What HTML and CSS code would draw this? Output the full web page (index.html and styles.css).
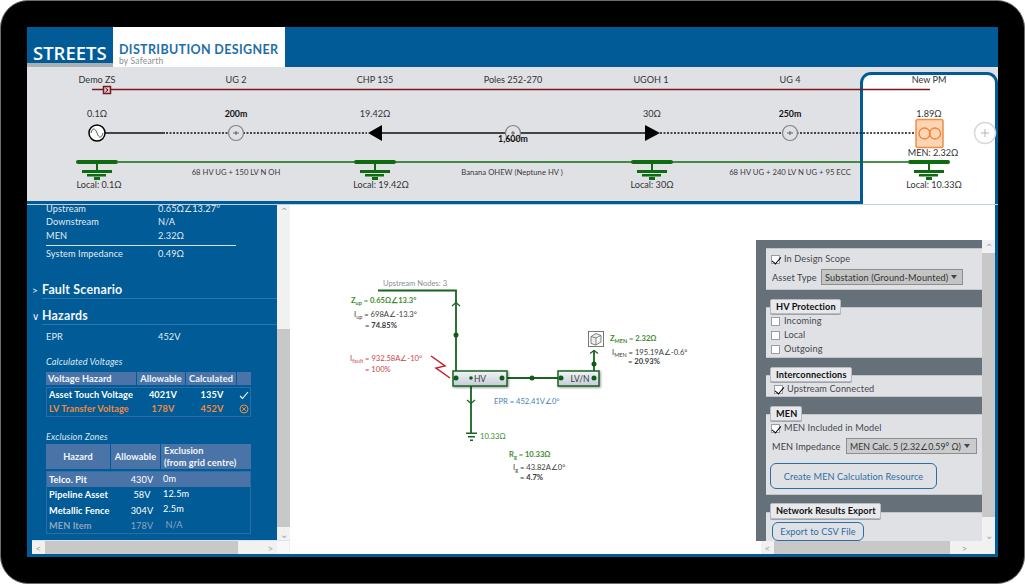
FILE: index.html
```html
<!DOCTYPE html>
<html lang="en">
<head>
<meta charset="utf-8">
<title>Streets Distribution Designer</title>
<link rel="stylesheet" href="styles.css">
</head>
<body>
<div class="device">
<div class="screen">
  <header class="header">
    <div class="brand">STREETS</div>
    <div class="logo">
      <div class="logo-title">DISTRIBUTION DESIGNER</div>
      <div class="logo-sub">by Safearth</div>
    </div>
  </header>

  <section class="strip">
    <div class="new-pm"></div>
    <svg class="strip-svg" viewBox="27 67 971 137" width="971" height="137">
      <g class="t c">
        <text x="97" y="83">Demo ZS</text><text x="236" y="83">UG 2</text><text x="375" y="83">CHP 135</text>
        <text x="513" y="83">Poles 252-270</text><text x="651" y="83">UGOH 1</text><text x="790" y="83">UG 4</text><text x="929" y="83">New PM</text>
        <text x="97" y="117">0.1Ω</text><text x="375" y="117">19.42Ω</text><text x="652" y="117">30Ω</text><text x="929" y="117">1.89Ω</text>
      </g>
      <path class="red-line" d="M92 89.5H930"/>
      <rect class="red-box" x="103.5" y="86.5" width="7" height="7"/>
      <path class="red-chev" d="M105.5 88l2.5 2-2.5 2"/>

      <path class="black-line" d="M105 133H165M382 133H645"/>
      <path class="black-dots" d="M166 133H367M660 133H915"/>
      <path class="tri" d="M368 133L382 125V141Z"/>
      <path class="tri" d="M660 133L645 125V141Z"/>
      <circle class="source" cx="97" cy="133" r="8"/>
      <path class="sine" d="M91 133c1.500-5.500 4-5.500 6 0s4.500 5.500 6 0"/>

      <g class="node"><circle cx="236" cy="133" r="7.500"/><path d="M233 133h6M236 131v4"/></g>
      <g class="node"><circle cx="513" cy="133" r="7.500"/><path d="M511 133h4M513 131v4"/></g>
      <g class="node"><circle cx="790" cy="133" r="7.500"/><path d="M787 133h6M790 131v4"/></g>
      <g class="tb c">
        <text x="236" y="117">200m</text><text x="513" y="142">1,600m</text><text x="790" y="117">250m</text>
      </g>

      <rect class="pm" x="916" y="119.500" width="27" height="28" rx="2"/>
      <circle class="pm-c" cx="924.500" cy="133.500" r="5.500"/><circle class="pm-c" cx="935" cy="133.500" r="5.500"/>
      <circle class="add" cx="985" cy="133" r="10.500"/>
      <path class="add-p" d="M981 133h8M985 129v8"/>

      <path class="green-line" d="M118 162H908"/>
      <g class="gnd"><rect x="76" y="160" width="42" height="4" rx="2"/><rect x="96" y="162" width="2" height="9"/><rect x="82" y="170" width="30" height="3"/><rect x="87" y="174" width="19" height="2.500"/><rect x="94" y="177" width="6" height="3"/></g>
      <g class="gnd"><rect x="354" y="160" width="42" height="4" rx="2"/><rect x="374" y="162" width="2" height="9"/><rect x="360" y="170" width="30" height="3"/><rect x="365" y="174" width="19" height="2.500"/><rect x="372" y="177" width="6" height="3"/></g>
      <g class="gnd"><rect x="631" y="160" width="42" height="4" rx="2"/><rect x="651" y="162" width="2" height="9"/><rect x="637" y="170" width="30" height="3"/><rect x="642" y="174" width="19" height="2.500"/><rect x="649" y="177" width="6" height="3"/></g>
      <g class="gnd"><rect x="908" y="160" width="42" height="4" rx="2"/><rect x="928" y="162" width="2" height="9"/><rect x="914" y="170" width="30" height="3"/><rect x="919" y="174" width="19" height="2.500"/><rect x="926" y="177" width="6" height="3"/></g>
      <g class="t c">
        <text x="933" y="156">MEN: 2.32Ω</text>
        <text x="99" y="188">Local: 0.1Ω</text><text x="381" y="188">Local: 19.42Ω</text><text x="652" y="188">Local: 30Ω</text><text x="934" y="188">Local: 10.33Ω</text>
      </g>
      <g class="ts c">
        <text x="236" y="175">68 HV UG + 150 LV N OH</text>
        <text x="512" y="175">Banana OHEW (Neptune HV )</text>
        <text x="790" y="175">68 HV UG + 240 LV N UG + 95 ECC</text>
      </g>
    </svg>
  </section>

  <main class="main">
    <aside class="left">
      <div class="left-scroll">
        <div class="left-body">
          <div class="kv kv-first"><span>Upstream</span><span>0.65Ω∠13.27°</span></div>
          <div class="kv"><span>Downstream</span><span>N/A</span></div>
          <div class="kv kv-rule"><span>MEN</span><span>2.32Ω</span></div>
          <div class="kv"><span>System Impedance</span><span>0.49Ω</span></div>
          <h2 class="section section-first"><span class="chev">&gt;</span>Fault Scenario</h2>
          <h2 class="section"><span class="chev">&#8744;</span>Hazards</h2>
          <div class="kv kv-epr"><span>EPR</span><span>452V</span></div>
          <div class="sub">Calculated Voltages</div>
          <div class="grid-head gh-a"><span>Voltage Hazard</span><span class="mid">Allowable</span><span class="mid">Calculated</span><span></span></div>
          <div class="grid-body">
            <div class="vrow"><b>Asset Touch Voltage</b><b class="mid">4021V</b><b class="mid">135V</b><svg class="ic" viewBox="0 0 10 10" width="10" height="10"><path class="ic-check" d="M1 6l2.500 2.500L9 2"/></svg></div>
            <div class="vrow vrow-bad"><b>LV Transfer Voltage</b><b class="mid">178V</b><b class="mid">452V</b><svg class="ic" viewBox="0 0 10 10" width="10" height="10"><circle class="ic-x" cx="5" cy="5" r="4"/><path class="ic-x" d="M3.200 3.200l3.600 3.600M6.800 3.200l-3.600 3.600"/></svg></div>
          </div>
          <div class="sub sub-ex">Exclusion Zones</div>
          <div class="grid-head gh-b"><span class="mid">Hazard</span><span class="mid">Allowable</span><span>Exclusion<br>(from grid centre)</span></div>
          <div class="grid-body gb-b">
            <div class="erow erow-on"><b>Telco. Pit</b><span class="mid">430V</span><span>0m</span></div>
            <div class="erow"><b>Pipeline Asset</b><span class="mid">58V</span><span>12.5m</span></div>
            <div class="erow"><b>Metallic Fence</b><span class="mid">304V</span><span>2.5m</span></div>
            <div class="erow erow-off"><b>MEN Item</b><span class="mid">178V</span><span>&nbsp;N/A</span></div>
          </div>
        </div>
        <div class="vbar vbar-left"><span class="sb-arrow">&#8963;</span><span class="vtrack"></span><span class="vthumb"></span><span class="sb-arrow sb-down">&#8964;</span></div>
      </div>
      <div class="hbar hbar-left"><span class="sb-arrow">&lt;</span><span class="hthumb"></span><span class="htrack"></span><span class="sb-arrow">&gt;</span><span class="hcorner"></span></div>
    </aside>

    <section class="canvas">
      <svg class="canvas-svg" viewBox="290 204 465 351" width="465" height="351">
        <defs>
          <linearGradient id="busfill" x1="0" y1="0" x2="0" y2="1">
            <stop offset="0" stop-color="#f2f4f7"/><stop offset="1" stop-color="#c3ccd6"/>
          </linearGradient>
        </defs>
        <path class="g-line" d="M378 290.500H456V378M506 378H559M594 378V350M471 378V433"/>
        <path class="g-chev" d="M452 306l4-3.500 4 3.500M590 353.500l4-3 4 3M467 400l4 3.500 4-3.500"/>
        <text class="d d-gray c" x="415" y="286">Upstream Nodes: 3</text>
        <rect class="bus" x="453" y="371" width="54" height="15"/>
        <rect class="bus" x="558" y="371" width="41" height="15"/>
        <text class="d d-dark d-bus c" x="480" y="381.500">HV</text>
        <text class="d d-dark d-bus c" x="580" y="381.500">LV/N</text>
        <g class="dots">
          <circle cx="456" cy="335" r="2.500"/><circle cx="456" cy="378" r="2.500"/><circle cx="471" cy="378" r="1.800"/><circle cx="502" cy="378" r="2.500"/>
          <circle cx="532" cy="378" r="2.500"/><circle cx="561" cy="378" r="2.500"/><circle cx="594" cy="378" r="2.500"/><circle cx="594" cy="364" r="2.500"/>
        </g>
        <path class="bolt" d="M431 356L445 366L436 368L450 378"/>
        <g class="d-g-bars"><rect x="466" y="432.500" width="11" height="1.500"/><rect x="468" y="436" width="7" height="1.500"/><rect x="470" y="439.500" width="3" height="1.500"/></g>

        <rect class="asset" x="588.500" y="331.500" width="15" height="15"/>
        <path class="asset-i" d="M591 336.500l5-3 5 2-5 2.500zM591 336.500v7l5 1.500v-7M601 335.500v6.500l-5 3"/>

        <text class="d d-green d-b" x="351" y="303">Z<tspan class="sb" dy="2">up</tspan><tspan dy="-2"> = 0.65Ω∠13.3°</tspan></text>
        <text class="d d-dark" x="354" y="317">I<tspan class="sb" dy="2">up</tspan><tspan dy="-2"> = 698A∠-13.3°</tspan></text>
        <text class="d d-dark d-b" x="365" y="328">= 74.85%</text>
        <text class="d d-red" x="350" y="361">I<tspan class="sb" dy="2">fault</tspan><tspan dy="-2"> = 932.58A∠-10°</tspan></text>
        <text class="d d-red" x="365" y="372">= 100%</text>
        <text class="d d-green d-b" x="610" y="341">Z<tspan class="sb" dy="2">MEN</tspan><tspan dy="-2"> = 2.32Ω</tspan></text>
        <text class="d d-dark" x="612" y="355">I<tspan class="sb" dy="2">MEN</tspan><tspan dy="-2"> = 195.19A∠-0.6°</tspan></text>
        <text class="d d-dark d-b" x="628" y="364">= 20.93%</text>
        <text class="d d-blue" x="494" y="404">EPR = 452.41V∠0°</text>
        <text class="d d-green" x="480" y="439">10.33Ω</text>
        <text class="d d-green d-b" x="509" y="457">R<tspan class="sb" dy="2">g</tspan><tspan dy="-2"> = 10.33Ω</tspan></text>
        <text class="d d-dark" x="513" y="470">I<tspan class="sb" dy="2">g</tspan><tspan dy="-2"> = 43.82A∠0°</tspan></text>
        <text class="d d-dark d-b" x="520" y="480">= 4.7%</text>
      </svg>
    </section>

    <aside class="right">
      <div class="right-row">
        <div class="props">
          <div class="card card-a">
            <label class="chk"><span class="box on"></span>In Design Scope</label>
            <div class="field"><span class="lbl-a">Asset Type</span><span class="select sel-a">Substation (Ground-Mounted)<i class="caret"></i></span></div>
          </div>
          <div class="card card-tab card-hv">
            <div class="tab">HV Protection</div>
            <label class="chk"><span class="box"></span>Incoming</label>
            <label class="chk"><span class="box"></span>Local</label>
            <label class="chk"><span class="box"></span>Outgoing</label>
          </div>
          <div class="card card-tab">
            <div class="tab">Interconnections</div>
            <label class="chk chk-in"><span class="box on"></span>Upstream Connected</label>
          </div>
          <div class="card card-tab card-men">
            <div class="tab">MEN</div>
            <label class="chk"><span class="box on"></span>MEN Included in Model</label>
            <div class="field"><span class="lbl-b">MEN Impedance</span><span class="select sel-b">MEN Calc. 5 (2.32∠0.59° Ω)<i class="caret"></i></span></div>
            <button class="btn btn-lg">Create MEN Calculation Resource</button>
          </div>
          <div class="card card-tab card-last">
            <div class="tab tab-last">Network Results Export</div>
            <button class="btn btn-sm">Export to CSV File</button>
          </div>
        </div>
        <div class="vbar vbar-right"><span class="sb-arrow">&#8963;</span><span class="vthumb"></span><span class="vtrack"></span><span class="sb-arrow sb-down">&#8964;</span></div>
      </div>
      <div class="hbar hbar-right"><span class="sb-arrow">&lt;</span><span class="hthumb"></span><span class="sb-arrow sb-end">&gt;</span></div>
    </aside>
  </main>
</div>
</div>
</body>
</html>
```

FILE: styles.css
```css
* { box-sizing: border-box; }
html, body { margin: 0; padding: 0; background: #fff; }
body { width: 1025px; height: 584px; overflow: hidden; font-family: Lato, "Open Sans", sans-serif; }

.device {
  width: 1025px; height: 584px; padding: 26px;
  background: #000; border: 1px solid #6d6d6d; border-radius: 28px;
}
.screen { width: 971px; height: 530px; background: #fff; display: flex; flex-direction: column; overflow: hidden; }

.header { height: 40px; flex: none; background: #005b96; display: flex; }
.brand {
  width: 86px; height: 40px; padding: 12px 0 0 6px; color: #fff; font-size: 18.500px; line-height: 27px; font-weight: 600;
  border-bottom: 4px solid #a9b0b6; font-family: "Open Sans", Lato, sans-serif; overflow: hidden;
}
.logo { width: 172px; height: 40px; background: #fff; padding: 16px 0 0 6px; }
.logo-title { color: #1f6ea8; font-size: 12.500px; line-height: 14px; font-weight: 700; letter-spacing: .35px; white-space: nowrap; }
.logo-sub { color: #8a8f94; font-size: 8.500px; line-height: 9px; letter-spacing: .2px; }

.strip { height: 137px; flex: none; position: relative; background: #e0e1e5; border-bottom: 3px solid #005b96; box-shadow: 0 1px 0 #bcd2e2; }
.new-pm {
  position: absolute; left: 833px; top: 5px; width: 138px; height: 132px;
  background: #fff; border: 3px solid #005b96; border-bottom: 0; border-radius: 11px 11px 0 0;
}
.strip-svg { position: absolute; left: 0; top: 0; display: block; }

.t text { font-size: 9.100px; fill: #333; font-family: Lato, sans-serif; }
.tb text { font-size: 8.800px; fill: #111; font-weight: 700; font-family: Lato, sans-serif; }
.ts text { font-size: 7.700px; fill: #3a3a3a; font-family: Lato, sans-serif; }
.c, .c text { text-anchor: middle; }
.red-line { stroke: #7a1a20; stroke-width: 1.400; fill: none; }
.red-box { fill: #e0c8c8; stroke: #7a1a20; stroke-width: 1.500; }
.red-chev { stroke: #222; stroke-width: 1; fill: none; }
.black-line { stroke: #111; stroke-width: 1.500; fill: none; }
.black-dots { stroke: #111; stroke-width: 1.500; stroke-dasharray: 2 1.500; fill: none; }
.tri { fill: #000; }
.source { fill: #fff; stroke: #000; stroke-width: 1.500; }
.sine { fill: none; stroke: #333; stroke-width: .8; }
.node circle { fill: #e0e1e5; stroke: #808285; stroke-width: 1.200; }
.node path { stroke: #444; stroke-width: .8; fill: none; }
.pm { fill: #fcd5b5; stroke: #f58b45; stroke-width: 1.500; }
.pm-c { fill: none; stroke: #f47f30; stroke-width: 1.300; }
.add { fill: #fff; stroke: #d9d9d9; stroke-width: 1.500; }
.add-p { stroke: #b5b5b5; stroke-width: 1; fill: none; }
.green-line { stroke: #0f6b0f; stroke-width: 1.300; fill: none; }
.gnd rect { fill: #0f6b0f; }

.main { flex: 1; min-height: 0; display: flex; }

.left { width: 263px; flex: none; background: #005b96; display: flex; flex-direction: column; border-bottom: 3px solid #005b96; }
.left-scroll { flex: 1; min-height: 0; display: flex; overflow: hidden; }
.left-body { width: 250px; flex: none; color: #e3ebf3; font-size: 9.200px; letter-spacing: .1px; }
.kv { display: grid; grid-template-columns: 112px auto; line-height: 14px; height: 14px; margin-left: 19px; width: 190px; }
.kv-first { height: 11px; line-height: 9px; }
.kv-rule { height: 17px; border-bottom: 1px solid #d6e3ee; margin-bottom: 1px; }
.kv-epr { margin-top: 5px; }
.section {
  margin: 0 0 0 15px; height: 26px; padding-top: 8px; font-size: 12.400px; line-height: 18px; font-weight: 700; color: #f2f6fa;
  border-bottom: 1px solid #2a78ac; position: relative; letter-spacing: .2px;
}
.section-first { margin-top: 12px; }
.chev { position: absolute; left: -10px; top: 8px; font-weight: 400; font-size: 10px; }
.sub { margin: 12px 0 0 19px; font-style: italic; line-height: 12px; color: #dbe6f0; height: 12px; }
.sub-ex { margin-top: 14px; }
.grid-head { margin: 4px 0 0 19px; width: 205px; display: grid; gap: 1px; color: #f2f6fa; font-weight: 700; white-space: nowrap; }
.grid-head > span { background: #4a74a8; padding: 0 2px; }
.gh-a { grid-template-columns: 90px 48px 50px 14px; line-height: 13px; }
.gh-b { grid-template-columns: 64px 49px 90px; line-height: 12px; margin-top: 1px; }
.gh-b > span { min-height: 24px; display: flex; align-items: center; justify-content: center; }
.gh-b > span:last-child { display: block; padding: 1px 3px 0; text-align: left; }
.mid { text-align: center; }
.grid-body { margin: 2px 0 0 19px; width: 205px; border: 1px solid #2a6ea6; white-space: nowrap; }
.vrow { display: grid; grid-template-columns: 92px 48px 50px 14px; height: 14px; line-height: 14px; color: #fff; align-items: center; }
.vrow b { padding-left: 2px; }
.vrow .mid { padding: 0; }
.vrow-bad { color: #f08a3c; }
.ic { display: block; margin-left: 2px; }
.ic-check { stroke: #fff; stroke-width: 1.100; fill: none; }
.ic-x { stroke: #f08a3c; stroke-width: 1; fill: none; }
.gb-b { height: 63px; }
.erow { display: grid; grid-template-columns: 78px 34px 90px; height: 15.300px; line-height: 15px; color: #fff; align-items: center; }
.erow b { padding-left: 2px; }
.erow span:last-child { padding-left: 4px; margin-top: -3px; }
.erow-on { background: #4a74a8; }
.erow-off { color: #8ea6bf; }

.vbar { width: 13px; flex: none; display: flex; flex-direction: column; background: #f1f1f1; }
.sb-arrow { height: 13px; flex: none; width: 13px; display: flex; align-items: center; justify-content: center; color: #a5a5a5; font-size: 10px; line-height: 1; background: #f1f1f1; }
.vtrack { flex: none; background: #f1f1f1; }
.vbar-left .vtrack { height: 112px; }
.vbar-left .vthumb { height: 198px; flex: none; background: #c8c8c8; }
.vbar-right .vthumb { height: 264px; flex: none; background: #c8c8c8; }
.vbar-right .vtrack { flex: 1; }
.sb-down { margin-top: auto; }

.hbar { height: 14px; flex: none; display: flex; background: #f1f1f1; }
.hbar-left { margin-left: 5px; border-top: 1px solid #d6e6f1; }
.hthumb { background: #c8c8c8; }
.hbar-left .hthumb { width: 193px; }
.htrack { width: 26px; }
.hcorner { width: 12px; background: #f8f8f8; }

.canvas { flex: 1; min-width: 0; background: #fff; border-bottom: 3px solid #005b96; overflow: hidden; }
.canvas-svg { display: block; }
.d { font-size: 7.600px; font-family: Lato, sans-serif; }
.d-bus { font-size: 8.500px; }
.sb { font-size: 5.500px; }
.d-b { font-weight: 700; }
.d-gray { fill: #8a8f94; }
.d-dark { fill: #3c3c3c; }
.d-green { fill: #3d8a2e; }
.d-red { fill: #c8484c; }
.d-blue { fill: #3f7fb5; }
.g-line { stroke: #1a6320; stroke-width: 1.800; fill: none; }
.g-chev { stroke: #1a6320; stroke-width: 1.200; fill: none; }
.bus { fill: url(#busfill); stroke: #1a6320; stroke-width: 1.500; filter: drop-shadow(1px 1px 1px rgba(0,0,0,.4)); }
.dots circle { fill: #0f5c18; }
.bolt { fill: none; stroke: #c4232b; stroke-width: 1.500; }
.d-g-bars rect { fill: #1a6320; }
.asset { fill: #fff; stroke: #777; stroke-width: 1; }
.asset-i { fill: #eee; stroke: #666; stroke-width: .8; }

.right { width: 243px; flex: none; display: flex; flex-direction: column; padding: 36px 0 0 1px; background: #fff; border-right: 3px solid #005b96; border-bottom: 3px solid #005b96; }
.right-row { flex: 1; min-height: 0; display: flex; }
.props { width: 226px; flex: none; background: #667079; padding: 8px 0 0 10px; overflow: hidden; color: #3c4248; font-size: 9.200px; letter-spacing: .1px; }
.card { background: #e0e1e5; border-top: 1px solid #c3c7cc; border-bottom: 1px solid #c3c7cc; padding: 0 0 0 5px; }
.card-a { height: 42px; padding-top: 3px; }
.card-tab { margin-top: 17px; }
.card-hv { height: 51px; }
.tab {
  display: block; width: fit-content; margin: -9px 0 0 -1px; height: 15px; line-height: 13px; padding: 0 4px 0 5px; white-space: nowrap;
  background: #e8e9ec; border: 1px solid #b8bcc2; border-radius: 2px; color: #111; font-weight: 700; box-shadow: 0 1px 0 #9fa4aa;
}
.tab-last { margin-top: -10px; height: 16px; line-height: 14px; }
.chk { display: flex; align-items: center; height: 14px; line-height: 14px; color: #444a50; }
.chk-in { margin-left: 3px; }
.box { width: 9px; height: 9px; background: #fff; border: 1px solid #9a9ea3; margin-right: 4px; flex: none; position: relative; }
.box.on::after {
  content: ""; position: absolute; left: 2px; top: -1px; width: 4px; height: 8px;
  border: solid #000; border-width: 0 1.500px 1.500px 0; transform: rotate(40deg);
}
.field { display: flex; align-items: center; margin: 3px 0 0 1px; white-space: nowrap; }
.lbl-a { width: 49px; flex: none; }
.lbl-b { width: 74px; flex: none; }
.select { display: flex; align-items: center; height: 16px; padding-left: 3px; border: 1px solid #8c8f90; color: #333; background: #c3c4c3; white-space: nowrap; }
.sel-a { width: 142px; }
.sel-b { width: 131px; background: #c9cbcd; font-size: 8.800px; letter-spacing: 0; }
.caret { width: 0; height: 0; border: solid transparent; border-width: 4px 3.500px 0; border-top-color: #444; margin-left: 3px; }
.card-men { height: 81px; }
.btn {
  display: block; background: transparent; border: 1.500px solid #2a6ea6; border-radius: 6px; color: #2a6ea6;
  font: inherit; letter-spacing: .1px; padding: 0;
}
.btn-lg { width: 167px; height: 26px; margin: 9px 0 0 -1px; }
.btn-sm { width: 92px; height: 19px; margin: 3px 0 0 1px; }
.card-last { height: 40px; }

.hbar-right { margin-left: 5px; height: 13px; background: #f1f1f1; width: 234px; }
.hbar-right .hthumb { width: 176px; }
.sb-end { margin-left: 8px; }
```
